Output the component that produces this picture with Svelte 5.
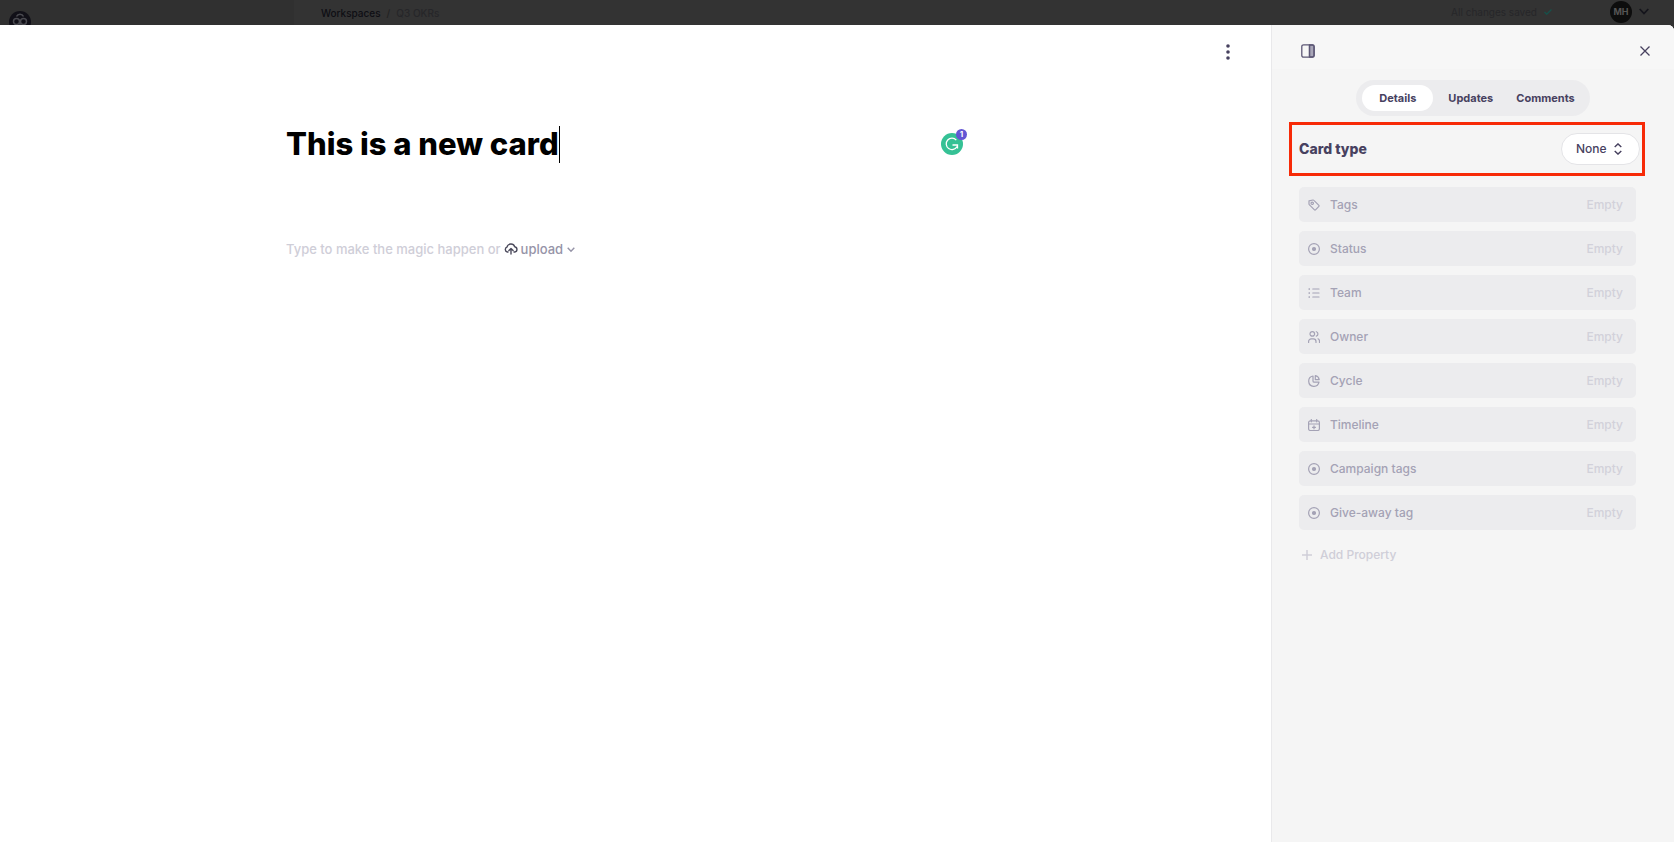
<script lang="ts">
	interface Property {
		name: string;
		icon: 'tag' | 'target' | 'list' | 'people' | 'pie' | 'calendar';
	}

	const properties: Property[] = [
		{ name: 'Tags', icon: 'tag' },
		{ name: 'Status', icon: 'target' },
		{ name: 'Team', icon: 'list' },
		{ name: 'Owner', icon: 'people' },
		{ name: 'Cycle', icon: 'pie' },
		{ name: 'Timeline', icon: 'calendar' },
		{ name: 'Campaign tags', icon: 'target' },
		{ name: 'Give-away tag', icon: 'target' }
	];
	const tabs = ['Details', 'Updates', 'Comments'];

	let activeTab = $state('Details');
	let title = $state('This is a new card');
	let cardType = $state('None');
</script>

<div class="page">
	<header class="topbar">
		<div class="brand">
			<svg width="22" height="22" viewBox="0 0 22 22" fill="none">
				<circle cx="11" cy="11" r="11" fill="#111018" />
				<g stroke="#4a4a50" stroke-width="1.5">
					<circle cx="7.500" cy="10.500" r="3" />
					<circle cx="14.500" cy="10.500" r="3" />
					<path d="M7.500 5.500a3.800 3.800 0 0 1 7 0M11 11v4" />
				</g>
			</svg>
		</div>
		<nav class="crumbs">
			<a href="#workspaces">Workspaces</a>
			<span>/</span>
			<span class="current">Q3 OKRs</span>
		</nav>
		<div class="account">
			<span class="saved">All changes saved</span>
			<svg class="check" width="8" height="6" viewBox="0 0 8 6" fill="none" stroke="#17504a" stroke-width="1.400">
				<path d="M.5 3l2.200 2.200L7.500.5" />
			</svg>
			<span class="avatar">MH</span>
			<svg width="10" height="7" viewBox="0 0 10 7" fill="none" stroke="#15151c" stroke-width="1.800">
				<path d="M.7 1L5 5.500 9.300 1" />
			</svg>
		</div>
	</header>

	<div class="modal">
		<main class="editor">
			<div class="editor-bar">
				<button class="icon-btn" aria-label="More options">
					<svg width="4" height="16" viewBox="0 0 4 16" fill="#47415f">
						<circle cx="2" cy="2" r="1.800" />
						<circle cx="2" cy="8" r="1.800" />
						<circle cx="2" cy="14" r="1.800" />
					</svg>
				</button>
			</div>
			<div class="content">
				<div class="title-row">
					<input class="title" type="text" aria-label="Card title" bind:value={title} />
					<span class="caret"></span>
					<button class="assistant" aria-label="Writing suggestions">
						<svg width="22" height="22" viewBox="0 0 22 22" fill="none">
							<circle cx="11" cy="11" r="11" fill="#35c195" />
							<path d="M15.300 7.200A5.700 5.700 0 1 0 16 13.500M11.500 12h5v3.500" stroke="#fff" stroke-width="1.300" />
						</svg>
						<span class="count">1</span>
					</button>
				</div>
				<div class="body-row">
					<span>Type to make the magic happen or</span>
					<button class="upload">
						<svg width="14" height="12" viewBox="0 0 14 12" fill="none" stroke="#4b4a5c" stroke-width="1.400" stroke-linecap="round" stroke-linejoin="round">
							<path d="M4 9H3.300A2.500 2.500 0 0 1 3 4.200 4 4 0 0 1 10.700 3.700 2.700 2.700 0 0 1 10.800 9H10M7 11V5.500M4.900 7.500L7 5.400l2.100 2.100" />
						</svg>
						upload
						<svg class="chevron" width="8" height="6" viewBox="0 0 8 6" fill="none" stroke="#9694a8" stroke-width="1.400">
							<path d="M.7.8L4 4.300 7.300.8" />
						</svg>
					</button>
				</div>
			</div>
		</main>

		<aside class="sidebar">
			<div class="side-bar">
				<button class="icon-btn" aria-label="Toggle side panel">
					<svg width="14" height="14" viewBox="0 0 14 14" fill="none" stroke="#5d5876" stroke-width="1.300">
						<path d="M8.500 1H11.500A1.700 1.700 0 0 1 13 2.700v8.600A1.700 1.700 0 0 1 11.500 13H8.500z" fill="#a9a6b8" />
						<rect x=".8" y=".8" width="12.400" height="12.400" rx="1.800" />
						<path d="M8.500 1v12" />
					</svg>
				</button>
				<button class="icon-btn" aria-label="Close">
					<svg width="10" height="10" viewBox="0 0 10 10" fill="none" stroke="#47415f" stroke-width="1.300">
						<path d="M.5.5l9 9M9.500.5l-9 9" />
					</svg>
				</button>
			</div>

			<div class="tabs" role="tablist">
				{#each tabs as tab (tab)}
					<button role="tab" aria-selected={activeTab === tab} class:active={activeTab === tab} onclick={() => (activeTab = tab)}>
						{tab}
					</button>
				{/each}
			</div>

			<div class="card-type">
				<label for="card-type">Card type</label>
				<div class="select">
					<select id="card-type" bind:value={cardType}>
						<option>None</option>
					</select>
					<svg width="8" height="12" viewBox="0 0 8 12" fill="none" stroke="#47415f" stroke-width="1.400">
						<path d="M.7 4L4 .9 7.300 4M.7 8L4 11.100 7.300 8" />
					</svg>
				</div>
			</div>

			<div class="properties">
				{#each properties as property (property.name)}
					<button class="property">
						<svg width="12" height="12" viewBox="0 0 12 12" fill="none" stroke="#a4a2b5" stroke-width="1.200" stroke-linecap="round" stroke-linejoin="round">
							{#if property.icon === 'tag'}
								<path d="M1 1.800L5 1a1 1 0 0 1 .9.300l5 5a.7.7 0 0 1 0 1L7.500 10.900a.7.7 0 0 1-1 0l-5-5A1 1 0 0 1 1 5z" />
								<circle cx="4.200" cy="4.300" r="1.200" />
							{:else if property.icon === 'target'}
								<circle cx="6" cy="6" r="5.400" />
								<circle cx="6" cy="6" r="1.500" fill="#a4a2b5" />
							{:else if property.icon === 'list'}
								<path d="M4.800 2H11M4.800 6H11M4.800 10H11M1.200 1.500v1M1.200 5.500v1M1.200 9.500v1" />
							{:else if property.icon === 'people'}
								<circle cx="4.300" cy="2.900" r="2.300" />
								<path d="M.6 11.500v-1a2.700 2.700 0 0 1 2.700-2.700h2a2.700 2.700 0 0 1 2.700 2.700v1M8.300.7a2.300 2.300 0 0 1 0 4.400M10 7.800a2.500 2.500 0 0 1 1.500 2.400v1.300" />
							{:else if property.icon === 'pie'}
								<path d="M5 1a5.200 5.200 0 1 0 6 6.200H6.300A1.300 1.300 0 0 1 5 5.900zM7.300.7a4.800 4.800 0 0 1 3.900 3.900H7.300z" />
							{:else}
								<rect x=".6" y="1.800" width="10.800" height="9.700" rx="1.800" />
								<path d="M3.300.5v2.300M8.700.5v2.300M.6 5h10.800M6 6.800v3M4.500 8.300h3" />
							{/if}
						</svg>
						<span class="name">{property.name}</span>
						<span class="value">Empty</span>
					</button>
				{/each}
			</div>

			<button class="add">
				<svg width="10" height="10" viewBox="0 0 10 10" stroke="#cfced8" stroke-width="1.500">
					<path d="M5 0v10M0 5h10" />
				</svg>
				Add Property
			</button>
		</aside>
	</div>
</div>

<style>
	:global(body) {
		margin: 0;
		background: #333;
	}
	.page {
		display: flex;
		flex-direction: column;
		min-height: 100vh;
		font-family: Inter, sans-serif;
		font-size: 12px;
		line-height: 16px;
		color: #47415f;
	}
	button, input, select {
		font: inherit;
		color: inherit;
		border: none;
		background: none;
		padding: 0;
		margin: 0;
	}
	button {
		cursor: pointer;
	}
	svg {
		display: block;
		flex: none;
	}
	.topbar {
		display: flex;
		height: 25px;
		overflow: hidden;
		background: #333;
		font-size: 10px;
	}
	.brand {
		width: 294px;
		box-sizing: border-box;
		padding: 11px 9px 0;
		background: #303030;
	}
	.crumbs {
		display: flex;
		gap: 6px;
		flex: 1;
		padding: 5px 0 0 27px;
		font-weight: 500;
		color: #222;
	}
	.crumbs a {
		color: #0e0e14;
		text-decoration: none;
	}
	.crumbs .current {
		color: #262629;
	}
	.account {
		display: flex;
		align-items: center;
		padding: 0 25px 2px 0;
	}
	.saved {
		color: #262629;
	}
	.check {
		margin: 0 58px 0 7px;
	}
	.avatar {
		width: 22px;
		height: 22px;
		margin-right: 7px;
		border-radius: 50%;
		background: #0d0d0d;
		color: #555;
		font-size: 9px;
		font-weight: 700;
		line-height: 22px;
		text-align: center;
	}
	.modal {
		display: flex;
		flex: 1;
		border-top-right-radius: 6px;
		overflow: hidden;
		background: #fff;
	}
	.editor {
		flex: 1;
		min-width: 0;
	}
	.editor-bar {
		display: flex;
		justify-content: flex-end;
		padding: 19px 41px 0 0;
	}
	.content {
		max-width: 699px;
		margin: 0 auto;
		padding-top: 65px;
	}
	.title-row {
		display: flex;
		align-items: center;
		height: 38px;
		padding-right: 22px;
	}
	.title {
		field-sizing: content;
		height: 38px;
		outline: none;
		font-size: 31px;
		font-weight: 800;
		line-height: 38px;
		color: #000;
	}
	.caret {
		width: 1px;
		height: 37px;
		background: #000;
	}
	.assistant {
		position: relative;
		margin-left: auto;
	}
	.count {
		position: absolute;
		top: -4px;
		right: -4px;
		width: 11px;
		height: 11px;
		border-radius: 50%;
		background: #6356d4;
		color: #fff;
		font-size: 8px;
		font-weight: 700;
		line-height: 11px;
	}
	.body-row {
		display: flex;
		gap: 3px;
		padding-top: 78px;
		font-size: 13px;
		font-weight: 500;
		color: #cfced8;
	}
	.upload {
		display: flex;
		align-items: center;
		gap: 3px;
		color: #9694a8;
	}
	.chevron {
		margin: 2px 0 0 1px;
	}
	.sidebar {
		width: 403px;
		box-sizing: border-box;
		border-left: 1px solid #e9e9eb;
		background: #f5f5f5;
	}
	.side-bar {
		display: flex;
		justify-content: space-between;
		align-items: center;
		height: 44px;
		box-sizing: border-box;
		padding: 7px 24px 0 29px;
		background: #f7f7f7;
	}
	.tabs {
		display: flex;
		width: fit-content;
		margin: 11px auto 0;
		padding: 5px 7px 5px 6px;
		border-radius: 18px;
		background: #ececee;
	}
	.tabs button {
		height: 26px;
		padding: 0 8px;
		margin-right: 7px;
		border-radius: 13px;
		font-size: 11px;
		font-weight: 700;
	}
	.tabs .active {
		padding: 0 17px;
		background: #fff;
	}
	.tabs button:last-child {
		margin-right: 0;
	}
	.card-type {
		display: flex;
		justify-content: space-between;
		align-items: center;
		height: 54px;
		box-sizing: border-box;
		margin: 6px 29px 0 17px;
		padding: 0 2px 0 7px;
		border: 3px solid #f72a07;
	}
	.card-type label {
		font-size: 14px;
		font-weight: 800;
	}
	.select {
		position: relative;
	}
	.select select {
		appearance: none;
		display: block;
		width: 79px;
		height: 32px;
		padding: 0 14px;
		border: 1px solid #e4e4e7;
		border-radius: 16px;
		background: #fff;
		font-weight: 500;
	}
	.select svg {
		position: absolute;
		top: 10px;
		right: 18px;
		pointer-events: none;
	}
	.properties {
		display: flex;
		flex-direction: column;
		gap: 9px;
		margin: 11px 38px 0 27px;
	}
	.property {
		display: flex;
		align-items: center;
		height: 35px;
		padding: 0 13px 0 9px;
		border-radius: 5px;
		background: #ececee;
		font-weight: 500;
		color: #a4a2b5;
	}
	.name {
		margin-left: 10px;
	}
	.value {
		margin-left: auto;
		color: #d2d1da;
	}
	.add {
		display: flex;
		align-items: center;
		gap: 8px;
		margin: 17px 0 0 30px;
		font-weight: 500;
		color: #cfced8;
	}
</style>
